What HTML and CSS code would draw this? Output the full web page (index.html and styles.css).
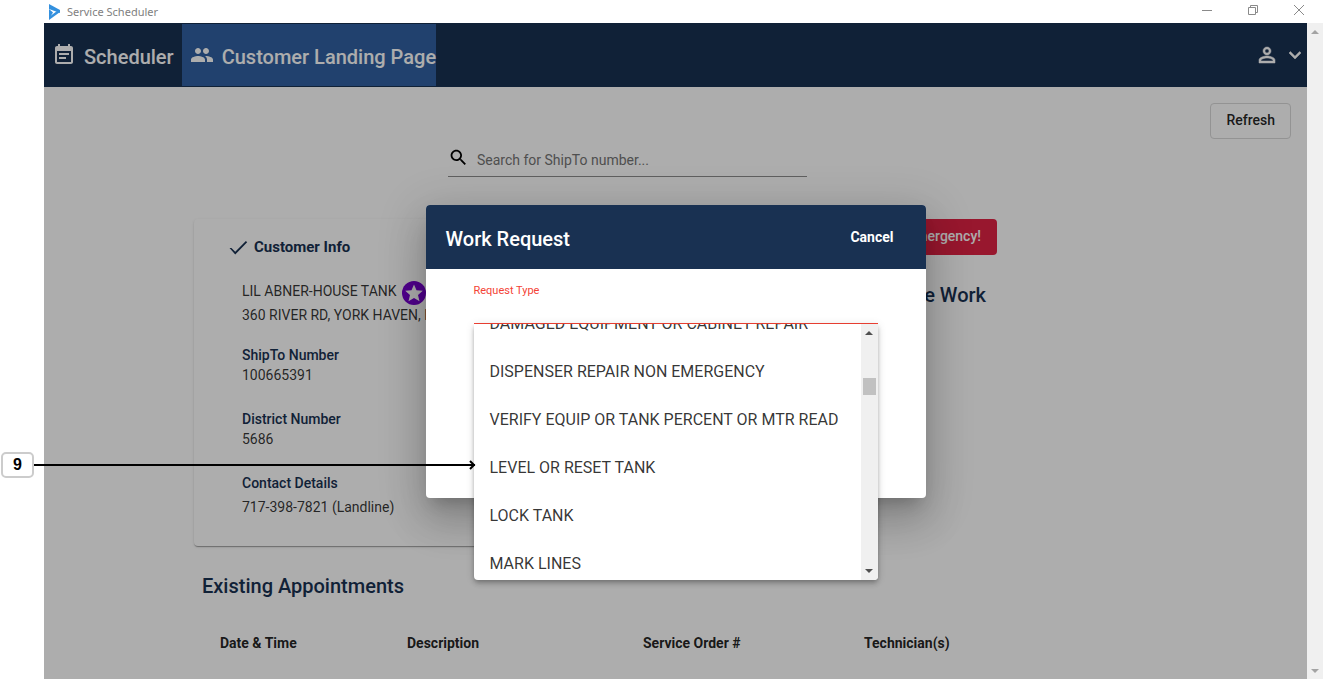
FILE: index.html
```html
<!DOCTYPE html>
<html lang="en">
<head>
<meta charset="utf-8">
<title>Service Scheduler</title>
<link rel="stylesheet" href="styles.css">
</head>
<body>
<div class="window">
  <header class="titlebar">
    <svg class="logo" viewBox="0 0 12 16" aria-hidden="true"><path fill="#3390de" d="M1 0l11 6v3L1 5z"/><path fill="#3390de" d="M12 8L1 16v-3l8-6z"/><path fill="#3390de" d="M1 5l4 3.500L1 15z"/></svg>
    <span class="titlebar-text">Service Scheduler</span>
    <div class="window-controls">
      <button type="button" aria-label="Minimize"><svg viewBox="0 0 12 12"><path d="M1 6.500h10"/></svg></button>
      <button type="button" aria-label="Restore"><svg viewBox="0 0 12 12"><path d="M1.500 3.500h7v7h-7zM3.500 3.500v-2h7v7h-2"/></svg></button>
      <button type="button" aria-label="Close"><svg viewBox="0 0 12 12"><path d="M1 1l10 10M11 1L1 11"/></svg></button>
    </div>
  </header>

  <div class="viewport">
    <div class="app">
      <nav class="navbar">
        <a class="tab" href="#scheduler"><svg class="icon" viewBox="0 0 24 24"><path d="M17 10H7v2h10v-2zm2-7h-1V1h-2v2H8V1H6v2H5c-1.110 0-1.990.9-1.990 2L3 19c0 1.100.89 2 2 2h14c1.100 0 2-.9 2-2V5c0-1.100-.9-2-2-2zm0 16H5V8h14v11zm-5-5H7v2h7v-2z"/></svg>Scheduler</a>
        <a class="tab tab-active" href="#customers"><svg class="icon" viewBox="0 0 24 24"><path d="M16 11c1.660 0 2.990-1.340 2.990-3S17.660 5 16 5s-3 1.340-3 3 1.340 3 3 3zm-8 0c1.660 0 2.990-1.340 2.990-3S9.660 5 8 5 5 6.340 5 8s1.340 3 3 3zm0 2c-2.330 0-7 1.170-7 3.500V19h14v-2.500c0-2.330-4.670-3.500-7-3.500zm8 0c-.29 0-.62.02-.97.05 1.160.84 1.970 1.970 1.970 3.450V19h6v-2.500c0-2.330-4.670-3.500-7-3.500z"/></svg>Customer Landing Page</a>
        <button type="button" class="account" aria-label="Account">
          <svg class="icon" viewBox="0 0 24 24"><path d="M12 4C9.790 4 8 5.790 8 8s1.790 4 4 4 4-1.790 4-4-1.790-4-4-4zm0 6c-1.100 0-2-.9-2-2s.9-2 2-2 2 .9 2 2-.9 2-2 2zM12 13c-2.670 0-8 1.340-8 4v3h16v-3c0-2.660-5.330-4-8-4zm6 5H6v-.99c.2-.72 3.300-2.010 6-2.010s5.800 1.290 6 2v1z"/></svg>
          <svg class="icon" viewBox="0 0 24 24"><path d="M7.400 8.600L12 13.200l4.600-4.600L18 10l-6 6-6-6z"/></svg>
        </button>
      </nav>

      <main class="content">
        <div class="actions"><button type="button" class="refresh">Refresh</button></div>
        <label class="search">
          <svg viewBox="0 0 24 24"><path d="M15.500 14h-.79l-.28-.27C15.410 12.590 16 11.110 16 9.500 16 5.910 13.090 3 9.500 3S3 5.910 3 9.500 5.910 16 9.500 16c1.610 0 3.090-.59 4.230-1.570l.27.28v.79l5 4.990L20.490 19l-4.990-5zm-6 0C7.010 14 5 11.990 5 9.500S7.010 5 9.500 5 14 7.010 14 9.500 11.990 14 9.500 14z"/></svg>
          <input type="search" placeholder="Search for ShipTo number..." aria-label="Search for ShipTo number">
        </label>

        <div class="columns">
          <section class="card">
            <h2 class="card-title"><svg viewBox="0 0 24 24"><path d="M9 16.170L4.830 12l-2.080 0L9 19 22 5.800 20.600 4.400z"/></svg>Customer Info</h2>
            <div class="details">
              <div class="line">LIL ABNER-HOUSE TANK <svg class="star" viewBox="0 0 24 24"><circle cx="12" cy="12" r="12" fill="#7600cf"/><path fill="#fff" d="M12 3.500l2.500 5.800 6.300.5-4.800 4.200 1.500 6.200-5.500-3.300-5.500 3.300L8 14 3.200 9.800l6.300-.5z"/></svg></div>
              <div class="line">360 RIVER RD, YORK HAVEN, PA</div>
              <dl class="facts">
                <div><dt>ShipTo Number</dt><dd>100665391</dd></div>
                <div><dt>District Number</dt><dd>5686</dd></div>
                <div><dt>Contact Details</dt><dd class="phone">717-398-7821 (Landline)</dd></div>
              </dl>
            </div>
          </section>
          <aside class="side">
            <button type="button" class="emergency">Emergency!</button>
            <h2 class="heading">Schedule Work</h2>
          </aside>
        </div>

        <section class="appointments">
          <h2 class="heading">Existing Appointments</h2>
          <table>
            <thead><tr><th class="col-date">Date &amp; Time</th><th class="col-desc">Description</th><th class="col-order">Service Order #</th><th>Technician(s)</th></tr></thead>
          </table>
        </section>
      </main>

      <div class="backdrop">
        <div class="dialog" role="dialog" aria-labelledby="dialog-title">
          <div class="dialog-head">
            <h1 id="dialog-title">Work Request</h1>
            <button type="button">Cancel</button>
          </div>
          <div class="dialog-body">
            <label for="request-type">Request Type</label>
            <div class="field">
              <select id="request-type"><option></option></select>
              <div class="menu">
                <ul role="listbox" aria-label="Request Type">
                  <li role="option">DAMAGED EQUIPMENT OR CABINET REPAIR</li>
                  <li role="option">DISPENSER REPAIR NON EMERGENCY</li>
                  <li role="option">VERIFY EQUIP OR TANK PERCENT OR MTR READ</li>
                  <li role="option">LEVEL OR RESET TANK</li>
                  <li role="option">LOCK TANK</li>
                  <li role="option">MARK LINES</li>
                </ul>
                <div class="menu-scroll"><i class="arrow-up"></i><i class="thumb"></i><i class="arrow-down"></i></div>
              </div>
            </div>
          </div>
        </div>
      </div>
    </div>
    <div class="page-scroll"><i class="arrow-up"></i><i class="arrow-down"></i></div>
  </div>
</div>

<div class="callout">
  <span class="callout-number">9</span>
  <span class="callout-line"></span>
  <svg viewBox="0 0 7 10"><path d="M1 1l4 4-4 4" fill="none" stroke="#000" stroke-width="2"/></svg>
</div>
</body>
</html>
```

FILE: styles.css
```css
* { box-sizing: border-box; }

body {
  margin: 0;
  background: #fff;
  font: 14px/20px Roboto, "Liberation Sans", sans-serif;
  color: rgba(0, 0, 0, 0.87);
}

h1, h2, ul, dl, dd { margin: 0; padding: 0; }
button, input, select { font: inherit; color: inherit; margin: 0; padding: 0; border: 0; background: none; }

.window {
  display: flex;
  flex-direction: column;
  height: 100vh;
  padding-left: 44px;
  overflow: hidden;
}

/* Title bar */
.titlebar { display: flex; align-items: center; flex: none; height: 23px; padding: 0 18px 0 4px; }
.logo { width: 12px; height: 16px; }
.titlebar-text { margin-left: 7px; font: 400 11px/20px "Noto Sans", "Open Sans", sans-serif; color: #808080; }
.window-controls { display: flex; gap: 34px; margin-left: auto; padding-bottom: 3px; }
.window-controls button { display: flex; }
.window-controls svg { width: 12px; height: 12px; fill: none; stroke: #8a8a8a; stroke-width: 1; }

.viewport { display: flex; flex: 1; min-height: 0; }
.app { position: relative; flex: 1; overflow: hidden; }

/* Navigation */
.navbar { display: flex; height: 64px; padding: 1px 0; background: #193152; color: #fff; }
.tab {
  display: flex;
  align-items: center;
  gap: 8px;
  padding: 4px 8px 0;
  font-size: 20px;
  line-height: 24px;
  font-weight: 500;
  color: #fff;
  text-decoration: none;
}
.tab-active { padding-right: 0; background: #3261a2; }
.icon { width: 24px; height: 24px; fill: currentColor; }
.tab .icon { margin-bottom: 4px; }
.account { display: flex; align-items: center; gap: 4px; margin-left: auto; }
.account .icon { stroke: currentColor; stroke-width: 0.5; }

/* Page content */
.actions { display: flex; justify-content: flex-end; padding: 16px 16px 0; }
.refresh { height: 36px; padding: 0 15px 2px; border: 1px solid #d9d9d9; border-radius: 4px; font-weight: 500; }
.search {
  display: flex;
  align-items: center;
  width: 359px;
  height: 38px;
  margin-left: 404px;
  border-bottom: 1px solid #8c8c8c;
}
.search svg { width: 21px; height: 21px; }
.search input { flex: 1; height: 20px; margin: 4px 0 0 8px; outline: 0; }
.search input::placeholder { color: #757575; opacity: 1; }

.columns {
  display: grid;
  grid-template-columns: 3fr 2fr;
  gap: 16px;
  margin: 42px 310px 0 150px;
}
.card {
  padding: 16px 0 29px 33px;
  border-radius: 4px;
  box-shadow: 0 2px 1px -1px rgba(0, 0, 0, 0.2), 0 1px 1px rgba(0, 0, 0, 0.14), 0 1px 3px rgba(0, 0, 0, 0.12);
}
.card-title { display: flex; align-items: center; gap: 5px; font-size: 15px; line-height: 24px; font-weight: 700; color: #193152; }
.card-title svg { width: 22px; height: 22px; margin-top: 2px; fill: currentColor; }
.details { padding: 20px 0 0 15px; color: rgba(0, 0, 0, 0.8); }
.line { display: flex; align-items: center; gap: 5px; height: 24px; white-space: nowrap; }
.star { width: 24px; height: 24px; margin-top: 4px; }
.facts { display: grid; gap: 24px; padding-top: 18px; }
.facts dt { font-weight: 500; color: #193152; }
.facts .phone { padding-top: 4px; }

.side { display: flex; flex-direction: column; align-items: flex-end; gap: 28px; }
.emergency { height: 36px; padding: 0 16px 2px; border-radius: 4px; background: #e12345; color: #fff; font-weight: 500; }
.heading { font-size: 20px; line-height: 24px; font-weight: 500; color: #193152; }
.side .heading { padding-right: 11px; }

.appointments { padding: 28px 0 0 158px; }
table { width: 100%; margin-top: 35px; border-collapse: collapse; table-layout: fixed; }
th { padding: 0 0 0 18px; font-weight: 700; text-align: left; }
.col-date { width: 187px; }
.col-desc { width: 236px; }
.col-order { width: 221px; }

/* Dialog */
.backdrop {
  position: absolute;
  inset: 0;
  display: flex;
  align-items: center;
  justify-content: center;
  background: rgba(0, 0, 0, 0.32);
}
.dialog {
  width: 500px;
  border-radius: 4px;
  background: #fff;
  box-shadow: 0 11px 15px -7px rgba(0, 0, 0, 0.2), 0 24px 38px 3px rgba(0, 0, 0, 0.14), 0 9px 46px 8px rgba(0, 0, 0, 0.12);
}
.dialog-head {
  display: flex;
  align-items: center;
  justify-content: space-between;
  height: 64px;
  padding: 0 32px 0 20px;
  border-radius: 4px 4px 0 0;
  background: #193152;
  color: #fff;
}
.dialog-head h1 { padding-top: 4px; font-size: 20px; line-height: 24px; font-weight: 500; }
.dialog-head button { font-weight: 700; }
.dialog-body { padding: 14px 48px 174px; }
.dialog-body label { display: block; font-size: 11px; line-height: 16px; color: #f44336; }
.field { position: relative; }
.field select { display: block; width: 100%; height: 25px; border-bottom: 1px solid #f44336; border-radius: 0; appearance: none; outline: 0; }

.menu {
  position: absolute;
  top: 100%;
  left: 0;
  right: 0;
  display: flex;
  height: 256px;
  overflow: hidden;
  border-radius: 0 0 4px 4px;
  background: #fff;
  box-shadow: 0 2px 4px -1px rgba(0, 0, 0, 0.2), 0 4px 5px rgba(0, 0, 0, 0.14), 0 1px 10px rgba(0, 0, 0, 0.12);
}
.menu ul { flex: 1; margin-top: -24px; list-style: none; color: rgba(0, 0, 0, 0.8); }
.menu li { padding: 0 16px; font-size: 16px; line-height: 48px; white-space: nowrap; }

/* Scroll bars */
.menu-scroll, .page-scroll { display: flex; flex-direction: column; align-items: center; background: #f0f0f0; }
.menu-scroll { width: 17px; padding: 7px 0; color: #505050; }
.page-scroll { width: 16px; padding: 7px 0 6px; color: #a3a3a3; }
.thumb { width: 13px; height: 17px; margin-top: 43px; background: #c1c1c1; }
.arrow-up, .arrow-down { border: 4px solid transparent; }
.arrow-up { border-top: 0; border-bottom-color: currentColor; }
.arrow-down { margin-top: auto; border-bottom: 0; border-top-color: currentColor; }

/* Callout */
.callout { position: absolute; top: 452px; left: 1px; display: flex; align-items: center; width: 475px; }
.callout-number {
  width: 33px;
  border: 2px solid #ccc;
  border-radius: 5px;
  background: #fff;
  font: 700 16px/22px "Liberation Sans", sans-serif;
  text-align: center;
  color: #000;
}
.callout-line { flex: 1; height: 2px; background: #000; }
.callout svg { width: 7px; height: 10px; margin-left: -6px; }
```
